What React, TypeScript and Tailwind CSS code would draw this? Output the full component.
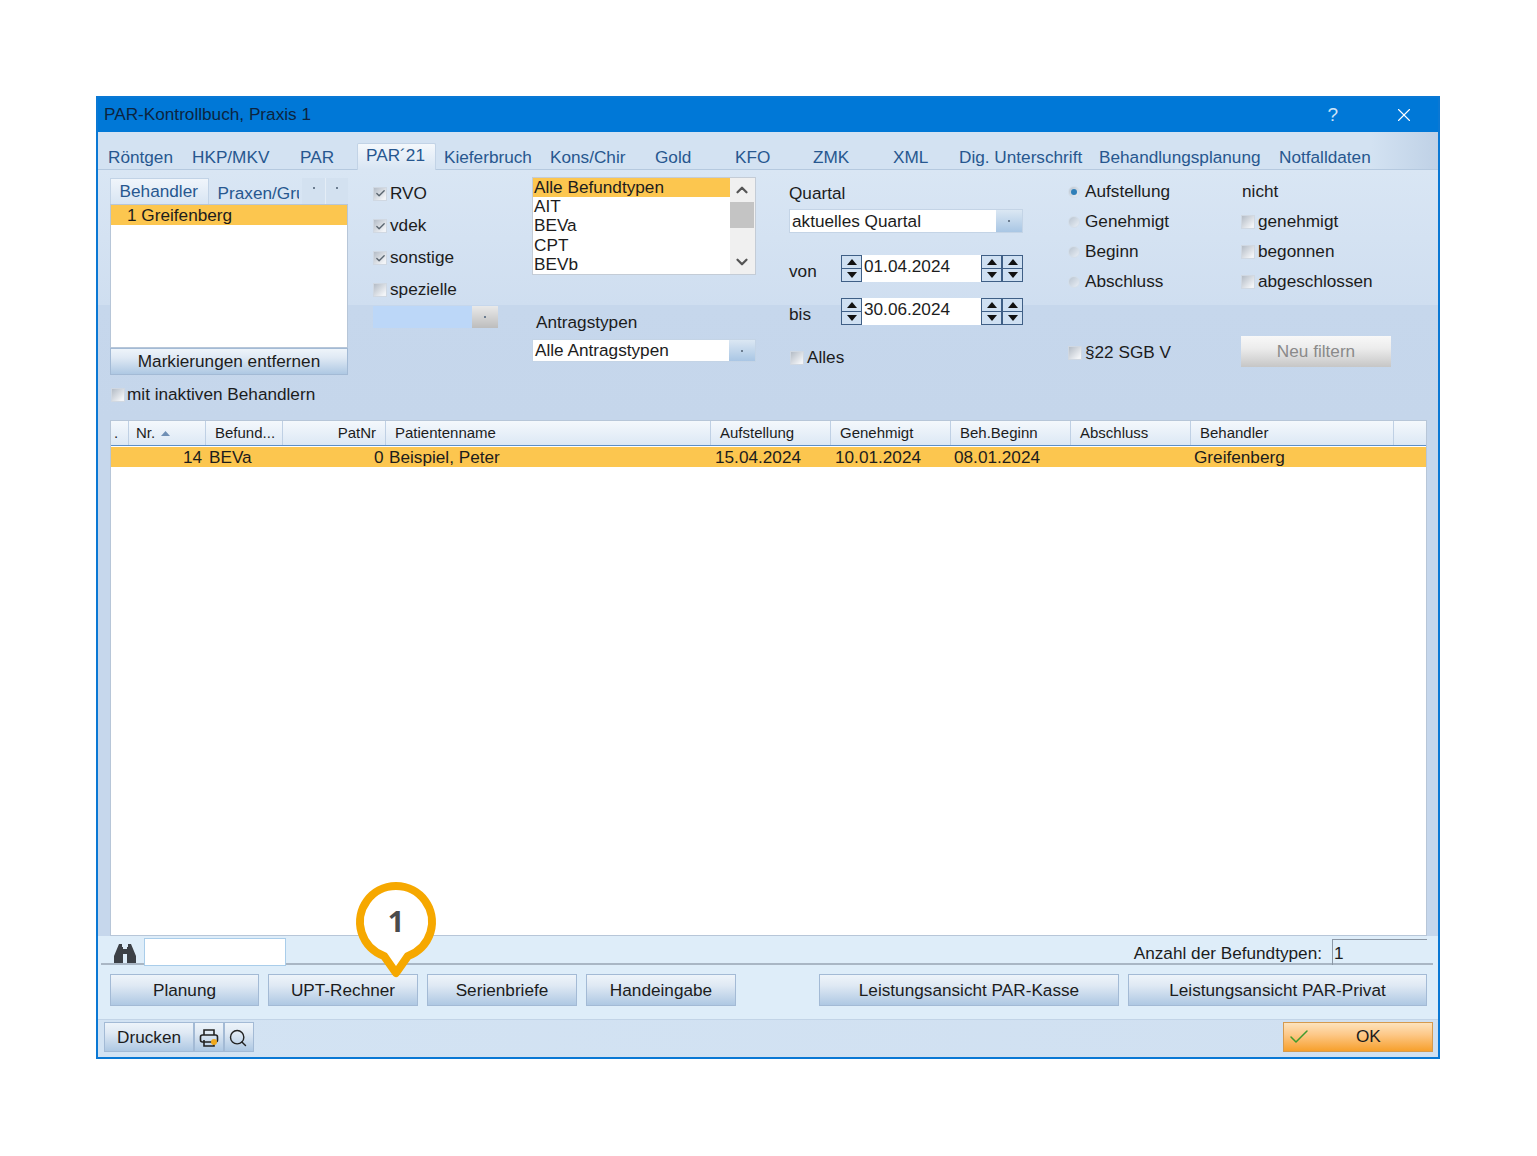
import React from "react";
import { Check, ChevronDown, ChevronUp, Search, X } from "lucide-react";

const btn =
  "flex items-center justify-center border border-[#a3bad5] bg-[linear-gradient(180deg,#eef4fa_0%,#dfe9f4_35%,#aec8e3_100%)] pt-[1px] text-[#1c1c1c]";

function Dot({ className = "" }: { className?: string }) {
  return <span className={"block h-[2px] w-[2px] bg-[#6c7d90] " + className} />;
}

function Box({ checked = false }: { checked?: boolean }) {
  return (
    <span className="flex h-[14px] w-[14px] shrink-0 items-center justify-center border border-[#d0d8e2] bg-[linear-gradient(135deg,#b4bcc6_0%,#f2f4f7_85%)]">
      {checked && <Check size={11} strokeWidth={3} className="text-[#5b6670]" />}
    </span>
  );
}

function CheckRow({ label, checked, className = "" }: { label: string; checked?: boolean; className?: string }) {
  return (
    <div className={"flex items-center gap-[3px] " + className}>
      <Box checked={checked} />
      <span>{label}</span>
    </div>
  );
}

function Radio({ label, on }: { label: string; on?: boolean }) {
  return (
    <div className="flex h-[30px] items-center gap-[5px]">
      <span className="flex h-[12px] w-[12px] items-center justify-center rounded-full border border-[#d4dfeb] bg-[linear-gradient(135deg,#b9c4d0,#e9eff6)]">
        {on && <span className="h-[6px] w-[6px] rounded-full bg-[#2f7fb8]" />}
      </span>
      <span>{label}</span>
    </div>
  );
}

function Spin() {
  return (
    <div className="flex h-[27px] w-[21px] shrink-0 flex-col border border-[#3f5f86] bg-[#cfe0f2]">
      <div className="flex flex-1 items-center justify-center border-b border-[#3f5f86]">
        <svg width="10" height="6" viewBox="0 0 10 6"><path d="M5 0L10 6H0Z" fill="#111" /></svg>
      </div>
      <div className="flex flex-1 items-center justify-center">
        <svg width="10" height="6" viewBox="0 0 10 6"><path d="M0 0H10L5 6Z" fill="#111" /></svg>
      </div>
    </div>
  );
}

function DateRow({ label, value, className = "" }: { label: string; value: string; className?: string }) {
  return (
    <div className={"flex h-[27px] items-center " + className}>
      <span className="mt-[7px] w-[52px]">{label}</span>
      <Spin />
      <div className="flex h-[27px] w-[119px] items-center bg-white pb-[3px] pl-[2px]">{value}</div>
      <Spin />
      <Spin />
    </div>
  );
}

function Combo({ text, className = "" }: { text: string; className?: string }) {
  return (
    <div className={"flex border border-[#c4d4e6] bg-white " + className}>
      <span className="flex flex-1 items-center pl-[2px] pt-[1px]">{text}</span>
      <span className="flex w-[26px] items-center justify-center bg-[linear-gradient(180deg,#dbe7f3,#a9c6e4)]">
        <Dot />
      </span>
    </div>
  );
}

function HeadCell({ label, className = "" }: { label: string; className?: string }) {
  return <div className={"flex h-full items-center border-r border-[#bfd0e4] pt-[1px] " + className}>{label}</div>;
}

export default function App() {
  return (
    <div className="h-[1156px] w-[1537px] bg-white pl-[96px] pt-[96px] [font-family:Liberation_Sans,sans-serif] text-[17.2px] text-[#1c1c1c]">
      <div className="relative flex h-[963px] w-[1344px] flex-col border-2 border-[#0a78d4] bg-[#c6d7ec]">
        {/* Title */}
        <div className="flex h-[34px] shrink-0 items-center bg-[#0078d7] pl-[6px] pr-[23px] text-[#0c2440]">
          <span className="flex-1">PAR-Kontrollbuch, Praxis 1</span>
          <span className="mr-[55px] text-[19px] text-[#cfe4f7]">?</span>
          <X size={22} strokeWidth={1.2} className="text-white" />
        </div>

        {/* Tabs */}
        <div className="flex h-[38px] shrink-0 items-end border-b border-[#b5c9df] bg-[linear-gradient(90deg,#d3e2f2_0%,#d3e2f2_95%,#bfd1e6_100%)] pl-[10px] text-[#27578f]">
          <span className="mb-[-2px] w-[84px]">Röntgen</span>
          <span className="mb-[-2px] w-[108px]">HKP/MKV</span>
          <span className="mb-[-2px] w-[57px]">PAR</span>
          <span className="z-10 mb-[-1px] flex h-[27px] w-[79px] items-center justify-center rounded-t-[2px] border border-b-0 border-[#c2d3e6] bg-[linear-gradient(180deg,#f4f8fc,#d8e5f3)] pb-[2px] pr-[2px]">
            PAR´21
          </span>
          <span className="mb-[-2px] ml-[8px] w-[106px]">Kieferbruch</span>
          <span className="mb-[-2px] w-[105px]">Kons/Chir</span>
          <span className="mb-[-2px] w-[80px]">Gold</span>
          <span className="mb-[-2px] w-[78px]">KFO</span>
          <span className="mb-[-2px] w-[80px]">ZMK</span>
          <span className="mb-[-2px] w-[66px]">XML</span>
          <span className="mb-[-2px] w-[140px]">Dig. Unterschrift</span>
          <span className="mb-[-2px] w-[180px]">Behandlungsplanung</span>
          <span className="mb-[-2px]">Notfalldaten</span>
        </div>

        {/* Filters */}
        <div className="flex h-[250px] shrink-0 bg-[linear-gradient(180deg,#d9e6f4_0%,#cfdef0_54%,#c6d7ec_54%,#c5d6eb_100%)] pl-[12px]">
          {/* Behandler */}
          <div className="w-[238px] pt-[8px]">
            <div className="flex h-[26px] items-end text-[#27578f]">
              <span className="flex h-[26px] w-[99px] items-center justify-center border border-b-0 border-[#c2d3e6] bg-[linear-gradient(180deg,#f0f5fb,#d8e5f3)] pr-[1px]">
                Behandler
              </span>
              <span className="ml-[9px] h-[23px] w-[82px] overflow-hidden whitespace-nowrap">Praxen/Gruppen</span>
              <span className="ml-[3px] flex h-[26px] w-[23px] items-center justify-center bg-[#d3e1f0]"><Dot className="mb-[6px]" /></span>
              <span className="flex h-[26px] w-[23px] items-center justify-center border-l border-[#e4edf6] bg-[#d3e1f0]"><Dot className="mb-[6px]" /></span>
            </div>
            <div className="h-[144px] border border-[#b7c6d8] bg-white">
              <div className="h-[20px] bg-[#fcc64f] pl-[16px] leading-[21px]">1 Greifenberg</div>
            </div>
            <div className={btn + " h-[27px]"}>Markierungen entfernen</div>
            <div className="mt-[9px] flex h-[20px] items-center gap-[2px] pl-[1px] pt-[1px]">
              <Box />
              <span>mit inaktiven Behandlern</span>
            </div>
          </div>

          {/* Kassen */}
          <div className="ml-[25px] w-[159px] pt-[7px]">
            <CheckRow label="RVO" checked className="h-[33px]" />
            <CheckRow label="vdek" checked className="h-[32px]" />
            <CheckRow label="sonstige" checked className="h-[32px]" />
            <CheckRow label="spezielle" className="h-[32px]" />
            <div className="flex h-[22px] w-[125px]">
              <span className="flex-1 bg-[#bcd7f8]" />
              <span className="flex w-[26px] items-center justify-center bg-[linear-gradient(180deg,#e9e9e9,#bdbdbd)]"><Dot /></span>
            </div>
          </div>

          {/* Typen */}
          <div className="w-[224px] pt-[7px]">
            <div className="flex h-[98px] overflow-hidden border border-[#c4ccd6] bg-white leading-[19.2px]">
              <div className="flex-1">
                <div className="bg-[#fcc64f] pl-[1px]">Alle Befundtypen</div>
                <div className="pl-[1px]">AIT</div>
                <div className="pl-[1px]">BEVa</div>
                <div className="pl-[1px]">CPT</div>
                <div className="pl-[1px]">BEVb</div>
              </div>
              <div className="flex w-[25px] flex-col items-center bg-[#f0f0f0] pr-[1px]">
                <ChevronUp size={18} strokeWidth={3} className="mt-[3px] text-[#555]" />
                <span className="mt-[3px] h-[26px] w-full bg-[#c4c4c4]" />
                <span className="flex-1" />
                <ChevronDown size={18} strokeWidth={3} className="mb-[3px] text-[#555]" />
              </div>
            </div>
            <div className="mt-[37px] h-[20px] pl-[4px] leading-[20px]">Antragstypen</div>
            <Combo text="Alle Antragstypen" className="mt-[7px] h-[23px]" />
          </div>

          {/* Quartal */}
          <div className="ml-[33px] w-[234px] pt-[13px]">
            <div className="h-[20px] leading-[20px]">Quartal</div>
            <Combo text="aktuelles Quartal" className="mt-[6px] h-[24px]" />
            <DateRow label="von" value="01.04.2024" className="mt-[22px]" />
            <DateRow label="bis" value="30.06.2024" className="mt-[16px]" />
            <CheckRow label="Alles" className="mt-[23px] h-[20px] pl-[1px]" />
          </div>

          {/* Datum */}
          <div className="ml-[45px] w-[173px] pt-[7px]">
            <Radio label="Aufstellung" on />
            <Radio label="Genehmigt" />
            <Radio label="Beginn" />
            <Radio label="Abschluss" />
            <CheckRow label="§22 SGB V" className="mt-[46px] h-[20px]" />
          </div>

          {/* nicht */}
          <div className="w-[150px] pt-[7px]">
            <div className="flex h-[30px] items-center pl-[1px]">nicht</div>
            <CheckRow label="genehmigt" className="h-[30px]" />
            <CheckRow label="begonnen" className="h-[30px]" />
            <CheckRow label="abgeschlossen" className="h-[30px]" />
            <div className="mt-[39px] flex h-[31px] items-center justify-center bg-[linear-gradient(180deg,#f8f8f8_0%,#ececec_40%,#c6c6c6_100%)] text-[#8a8a8a]">
              Neu filtern
            </div>
          </div>
        </div>

        {/* Table */}
        <div className="ml-[12px] h-[516px] w-[1317px] shrink-0 border border-[#b7c6d8] bg-white">
          <div className="flex h-[25px] items-center border-b border-[#5d8fc5] bg-[linear-gradient(180deg,#f4f8fc,#dce8f5)] text-[15px]">
            <HeadCell label="." className="w-[18px] pl-[3px]" />
            <div className="flex h-full w-[77px] items-center gap-[6px] border-r border-[#bfd0e4] pl-[7px] pt-[1px]">
              Nr.
              <svg width="9" height="5" viewBox="0 0 9 5"><path d="M4.5 0L9 5H0Z" fill="#6f8fb5" /></svg>
            </div>
            <HeadCell label="Befund..." className="w-[77px] pl-[9px]" />
            <HeadCell label="PatNr" className="w-[103px] justify-end pr-[9px]" />
            <HeadCell label="Patientenname" className="w-[325px] pl-[9px]" />
            <HeadCell label="Aufstellung" className="w-[120px] pl-[9px]" />
            <HeadCell label="Genehmigt" className="w-[120px] pl-[9px]" />
            <HeadCell label="Beh.Beginn" className="w-[120px] pl-[9px]" />
            <HeadCell label="Abschluss" className="w-[120px] pl-[9px]" />
            <HeadCell label="Behandler" className="w-[203px] pl-[9px]" />
          </div>
          <div className="mt-[1px] flex h-[20px] items-center bg-[#fcc64f] pt-[1px]">
            <span className="w-[91px] text-right">14</span>
            <span className="ml-[7px] w-[165px]">BEVa</span>
            <span className="w-[9px] text-right">0</span>
            <span className="ml-[6px] w-[326px]">Beispiel, Peter</span>
            <span className="w-[120px]">15.04.2024</span>
            <span className="w-[119px]">10.01.2024</span>
            <span className="w-[240px]">08.01.2024</span>
            <span>Greifenberg</span>
          </div>
        </div>

        {/* Lower area */}
        <div className="flex h-[83px] shrink-0 flex-col bg-[#deedf9]">
          <div className="relative ml-[3px] mr-[5px] flex h-[29px] shrink-0 items-end border-b-[2px] border-[#a9b6c4]">
            <svg width="24" height="20" viewBox="0 0 24 20" className="mb-[-1px] ml-[12px]">
              <path d="M6 0h3v3h1v16H1V12zM15 0h3l5 12v7H14V3h1zM10 5h4v5h-4z" fill="#3c4046" />
            </svg>
            <div className="z-10 mb-[-3px] ml-[7px] h-[28px] w-[142px] border border-[#a9cdea] bg-white" />
            <span className="mb-[-4px] ml-auto">Anzahl der Befundtypen:</span>
            <div className="mb-[-2px] ml-[10px] mr-[6px] h-[26px] w-[95px] border-l border-t border-[#8b97a5] pl-[1px] leading-[26px]">
              1
            </div>
          </div>
          <div className="mt-[9px] flex pl-[12px]">
            <div className={btn + " h-[32px] w-[149px]"}>Planung</div>
            <div className={btn + " ml-[9px] h-[32px] w-[150px]"}>UPT-Rechner</div>
            <div className={btn + " ml-[9px] h-[32px] w-[150px]"}>Serienbriefe</div>
            <div className={btn + " ml-[9px] h-[32px] w-[150px]"}>Handeingabe</div>
            <div className={btn + " ml-[83px] h-[32px] w-[300px]"}>Leistungsansicht PAR-Kasse</div>
            <div className={btn + " ml-[9px] h-[32px] w-[299px]"}>Leistungsansicht PAR-Privat</div>
          </div>
        </div>

        {/* Bottom bar */}
        <div className="flex flex-1 items-center border-t border-[#c2d4e7] bg-[linear-gradient(90deg,#d3e3f3,#d0e0f1)] pb-[3px] pl-[6px] pr-[5px]">
          <div className={btn + " h-[30px] w-[90px]"}>Drucken</div>
          <div className={btn + " h-[30px] w-[30px]"}>
            <svg width="20" height="20" viewBox="0 0 20 20" fill="none" stroke="#222" strokeWidth="1.6">
              <path d="M5 7V2h10v5" />
              <rect x="1.5" y="7" width="17" height="7" rx="2" />
              <path d="M5 12v6h10v-6" />
              <circle cx="15" cy="14" r="3" fill="#f0a81c" stroke="none" />
            </svg>
          </div>
          <div className={btn + " h-[30px] w-[30px] pr-[2px]"}>
            <Search size={20} strokeWidth={1.7} className="text-[#222]" />
          </div>
          <div className="ml-auto flex h-[30px] w-[150px] items-center border border-[#d59a4e] bg-[linear-gradient(180deg,#fde3bd_0%,#fdc98a_40%,#f7a02c_100%)]">
            <Check size={24} strokeWidth={1.5} className="ml-[3px] text-[#3f9b2e]" />
            <span className="ml-[45px]">OK</span>
          </div>
        </div>

        {/* Callout */}
        <div className="absolute left-[252px] top-[779px] h-[106px] w-[92px]">
          <svg width="92" height="106" viewBox="0 0 92 106">
            <path
              d="M34 78.9A36 36 0 1 1 58 78.9L46 96Z"
              fill="#fff"
              stroke="#f6a800"
              strokeWidth="8"
              strokeLinejoin="round"
            />
          </svg>
          <span className="absolute left-0 top-[24px] w-[92px] text-center [font-family:Open_Sans,sans-serif] text-[29px] font-bold leading-[40px] text-[#4b4b4b]">
            1
          </span>
        </div>
      </div>
    </div>
  );
}
